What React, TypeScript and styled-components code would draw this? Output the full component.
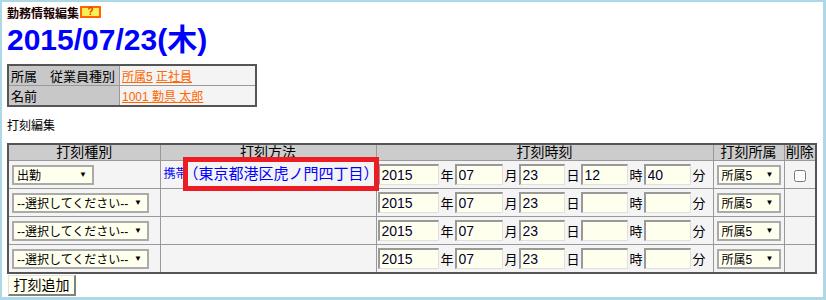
import React from 'react';
import styled, {createGlobalStyle} from "styled-components";

const GlobalStyle = createGlobalStyle`
  html, body {
    margin: 0;
    padding: 0;
    background: #ffffff;
  }
  body {
    font-family: "Liberation Sans", "Noto Sans CJK JP", sans-serif;
    color: #000;
  }
`

type RowType = {
    kind: string;
    method?: boolean;
    hour: string;
    minute: string;
    deletable?: boolean;
}

const rows: RowType[] = [
    {kind: "出勤", method: true, hour: "12", minute: "40", deletable: true},
    {kind: "--選択してください--", hour: "", minute: ""},
    {kind: "--選択してください--", hour: "", minute: ""},
    {kind: "--選択してください--", hour: "", minute: ""},
];

const Select = (props: { value: string; width: number }) => {
    return (
        <SelectBox $width={props.width}>
            <SelectText>{props.value}</SelectText>
            <SelectArrow>▼</SelectArrow>
        </SelectBox>
    );
};

export default function App() {
    return (
        <>
            <GlobalStyle/>
            <Page>
                <Title>
                    勤務情報編集<Help>?</Help>
                </Title>
                <DateHeading>2015/07/23(木)</DateHeading>

                <InfoTable>
                    <tbody>
                    <tr>
                        <InfoLabel>所属　従業員種別</InfoLabel>
                        <InfoValue><OrangeLink href="#">所属5</OrangeLink> <OrangeLink href="#">正社員</OrangeLink></InfoValue>
                    </tr>
                    <tr>
                        <InfoLabel>名前</InfoLabel>
                        <InfoValue><OrangeLink href="#">1001 勤具 太郎</OrangeLink></InfoValue>
                    </tr>
                    </tbody>
                </InfoTable>

                <Section>打刻編集</Section>

                <StampTable>
                    <colgroup>
                        <col style={{width: 152}}/>
                        <col style={{width: 216}}/>
                        <col style={{width: 337}}/>
                        <col style={{width: 71}}/>
                        <col style={{width: 32}}/>
                    </colgroup>
                    <thead>
                    <tr>
                        <Th>打刻種別</Th>
                        <Th>打刻方法</Th>
                        <Th>打刻時刻</Th>
                        <Th>打刻所属</Th>
                        <Th>削除</Th>
                    </tr>
                    </thead>
                    <tbody>
                    {rows.map((r, i) => (
                        <tr key={i}>
                            <Td>
                                <Select value={r.kind} width={r.method ? 82 : 137}/>
                            </Td>
                            <Td>
                                {r.method && (
                                    <Method>
                                        <Device>携帯</Device>
                                        <Address>（東京都港区虎ノ門四丁目）</Address>
                                    </Method>
                                )}
                            </Td>
                            <Td $pad={1}>
                                <TimeRow>
                                    <DateInput $w={61} defaultValue="2015"/>
                                    <Unit>年</Unit>
                                    <DateInput $w={48} defaultValue="07"/>
                                    <Unit>月</Unit>
                                    <DateInput $w={46} defaultValue="23"/>
                                    <Unit>日</Unit>
                                    <DateInput $w={47} defaultValue={r.hour}/>
                                    <Unit>時</Unit>
                                    <DateInput $w={47} defaultValue={r.minute}/>
                                    <Unit>分</Unit>
                                </TimeRow>
                            </Td>
                            <Td>
                                <Select value="所属5" width={64}/>
                            </Td>
                            <Td $center>
                                {r.deletable && <Check type="checkbox"/>}
                            </Td>
                        </tr>
                    ))}
                    </tbody>
                </StampTable>

                <AddButton>打刻追加</AddButton>

                <Mark/>
            </Page>
        </>
    );
}

const Page = styled.div`
  position: relative;
  box-sizing: border-box;
  width: 826px;
  height: 300px;
  border-style: solid;
  border-color: #add8e6;
  border-width: 2px 3px 3px 2px;
  padding: 0 0 0 5px;
  overflow: hidden;
`

const Title = styled.div`
  display: flex;
  align-items: center;
  height: 20px;
  font-size: 12px;
  font-weight: bold;
  color: #1a0000;
`

const Help = styled.span`
  display: inline-flex;
  align-items: center;
  justify-content: center;
  box-sizing: border-box;
  width: 21px;
  height: 12px;
  margin-left: 1px;
  border: 2px solid #ff6600;
  background: #ffee55;
  color: #dd4400;
  font-size: 10px;
  font-weight: bold;
  line-height: 1;
`

const DateHeading = styled.div`
  height: 36px;
  line-height: 36px;
  font-size: 30px;
  font-weight: bold;
  color: #0000ff;
`

const InfoTable = styled.table`
  margin-top: 6px;
  width: 250px;
  border-collapse: collapse;
  border: 2px solid #555555;

  td {
    border: 1px solid #999999;
    height: 19px;
    padding: 0 2px;
    white-space: nowrap;
  }
`

const InfoLabel = styled.td`
  width: 106px;
  background: #c8c8c8;
  font-size: 13px;
`

const InfoValue = styled.td`
  background: #f4f4f4;
  font-size: 12px;
`

const OrangeLink = styled.a`
  color: #ff6600;
  text-decoration: underline;
`

const Section = styled.div`
  margin-top: 11px;
  height: 16px;
  line-height: 16px;
  font-size: 12px;
`

const StampTable = styled.table`
  margin-top: 9px;
  width: 808px;
  table-layout: fixed;
  border-collapse: collapse;
  border: 2px solid #555555;
  font-size: 14px;
`

const Th = styled.th`
  height: 15px;
  padding: 0;
  background: #cccccc;
  border: 1px solid #999999;
  font-weight: normal;
  line-height: 15px;
  text-align: center;
  white-space: nowrap;
`

const Td = styled.td<{ $center?: boolean; $pad?: number }>`
  height: 27px;
  padding: 0 ${p => p.$pad ?? 3}px;
  background: #f4f4f4;
  border: 1px solid #999999;
  text-align: ${p => p.$center ? "center" : "left"};
  vertical-align: middle;
  white-space: nowrap;
`

const SelectBox = styled.div<{ $width: number }>`
  display: flex;
  align-items: center;
  justify-content: space-between;
  box-sizing: border-box;
  width: ${p => p.$width}px;
  height: 20px;
  padding: 0 5px 0 3px;
  background: #ffffee;
  border: 2px solid #aaaaaa;
  font-size: 12px;
`

const SelectText = styled.span`
  white-space: nowrap;
`

const SelectArrow = styled.span`
  font-size: 8px;
  color: #000;
`

const Method = styled.div`
  display: flex;
  align-items: center;
  height: 20px;
  margin-top: -4px;
  color: #0000ff;
`

const Device = styled.span`
  font-size: 12px;
`

const Address = styled.span`
  font-size: 15px;
  margin-left: -4px;
`

const TimeRow = styled.div`
  display: flex;
  align-items: center;
`

const DateInput = styled.input<{ $w: number }>`
  box-sizing: border-box;
  width: ${p => p.$w}px;
  height: 21px;
  padding: 0 2px;
  background: #ffffee;
  border-style: solid;
  border-width: 2px 1px 1px 2px;
  border-color: #999999 #e0e0e0 #e0e0e0 #999999;
  font-family: "Liberation Sans", sans-serif;
  font-size: 14px;
  color: #000033;
  outline: none;
`

const Unit = styled.span`
  box-sizing: border-box;
  width: 16px;
  padding-left: 2px;
  font-size: 13px;
`

const Check = styled.input`
  margin: 0;
  width: 12px;
  height: 12px;
  vertical-align: middle;
`

const AddButton = styled.button`
  display: block;
  box-sizing: border-box;
  width: 68px;
  height: 21px;
  margin: 1px 0 0 1px;
  padding: 0;
  background: #ffffee;
  border-style: solid;
  border-width: 1px 2px 2px 1px;
  border-color: #e0e0e0 #808080 #808080 #e0e0e0;
  font-family: "Liberation Sans", "Noto Sans CJK JP", sans-serif;
  font-size: 14px;
  line-height: 18px;
  color: #000;
`

const Mark = styled.div`
  position: absolute;
  left: 181px;
  top: 155px;
  width: 196px;
  height: 34px;
  box-sizing: border-box;
  border: 5px solid #ed1c24;
  pointer-events: none;
`
